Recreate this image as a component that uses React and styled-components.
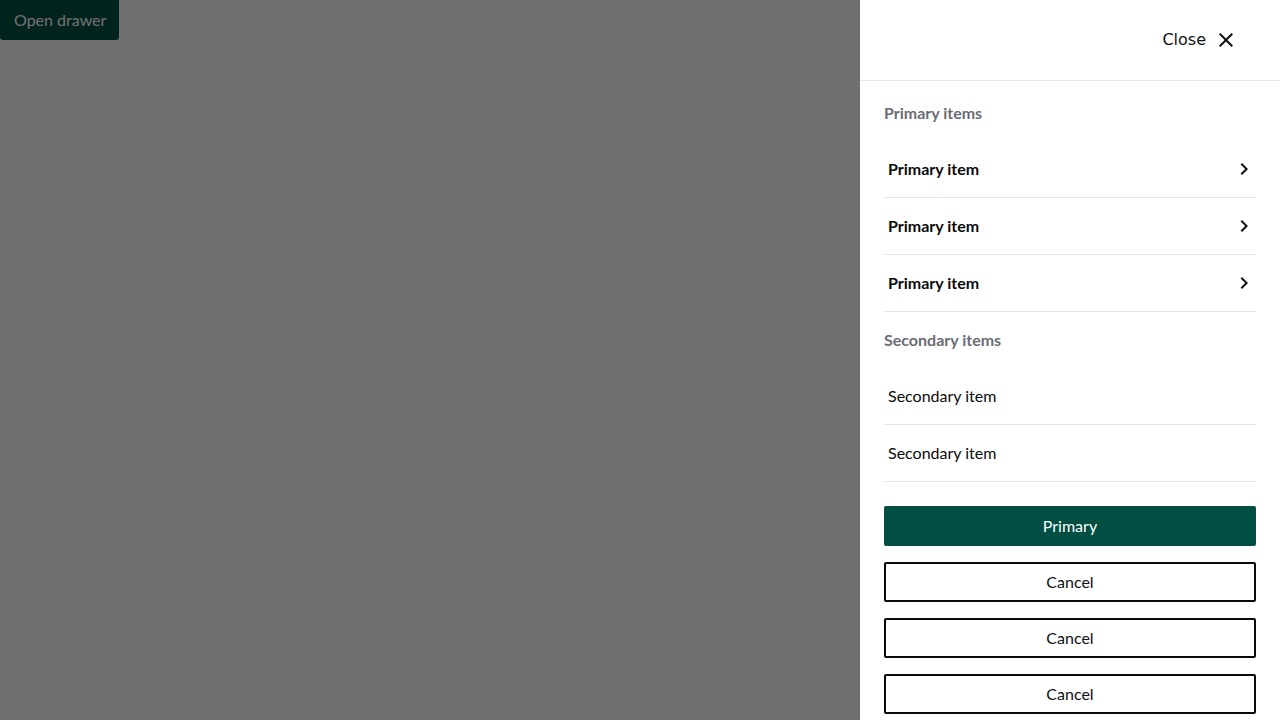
import React from "react";
import styled, { createGlobalStyle } from "styled-components";

const Global = createGlobalStyle`
  html, body { margin: 0; padding: 0; }
  body { font-family: Lato, "Noto Sans", sans-serif; background: #ffffff; }
  * { box-sizing: border-box; }
`;

const Page = styled.div`
  position: relative;
  width: 1280px;
  height: 720px;
  overflow: hidden;
  background: #ffffff;
`;

const OpenButton = styled.button`
  display: block;
  width: 119px;
  height: 40px;
  padding: 0 0 1px 14px;
  text-align: left;
  border: none;
  border-radius: 0 0 3px 3px;
  background: #005041;
  color: #ffffff;
  font-family: Lato, sans-serif;
  font-size: 16px;
  cursor: pointer;
`;

const Overlay = styled.div`
  position: absolute;
  inset: 0;
  background: rgba(0, 0, 0, 0.56);
`;

const Drawer = styled.aside`
  position: absolute;
  top: 0;
  right: 0;
  width: 420px;
  height: 720px;
  background: #ffffff;
  display: flex;
  flex-direction: column;
`;

const Header = styled.header`
  height: 81px;
  flex: none;
  display: flex;
  align-items: center;
  justify-content: flex-end;
  padding: 0 42px 1px 0;
  border-bottom: 1px solid #e6e6e6;
`;

const CloseButton = styled.button`
  display: flex;
  align-items: center;
  gap: 8px;
  border: none;
  background: none;
  padding: 0;
  color: #111111;
  font-family: "DejaVu Sans", sans-serif;
  font-size: 16px;
  cursor: pointer;
`;

const Body = styled.div`
  padding: 20px 24px 0;
  display: flex;
  flex-direction: column;
`;

const SectionTitle = styled.h3`
  margin: ${(p) => (p.$first ? "0" : "16px")} 0 16px;
  font-size: 16px;
  line-height: 24px;
  font-weight: 700;
  color: #6b6c75;
`;

const List = styled.ul`
  list-style: none;
  margin: 0;
  padding: 0;
`;

const Item = styled.li`
  height: 57px;
  display: flex;
  align-items: center;
  justify-content: space-between;
  padding: 0 0 1px 4px;
  border-bottom: 1px solid #e4e4e4;
  font-size: 16px;
  color: #0b0b0b;
  font-weight: ${(p) => (p.$primary ? 700 : 400)};
`;

const Actions = styled.div`
  display: flex;
  flex-direction: column;
  gap: 16px;
  margin-top: 24px;
`;

const ActionButton = styled.button`
  height: 40px;
  width: 100%;
  padding: 0 0 2px;
  border-radius: 2px;
  font-family: Lato, sans-serif;
  font-size: 16px;
  cursor: pointer;
  border: 2px solid ${(p) => (p.$primary ? "#004f42" : "#0a0a0a")};
  background: ${(p) => (p.$primary ? "#004f42" : "#ffffff")};
  color: ${(p) => (p.$primary ? "#ffffff" : "#111111")};
`;

const CloseIcon = () => (
  <svg width="24" height="24" viewBox="0 0 24 24" fill="#111">
    <path d="M19 6.41 17.59 5 12 10.59 6.41 5 5 6.41 10.59 12 5 17.59 6.41 19 12 13.41 17.59 19 19 17.59 13.41 12z" />
  </svg>
);

const Chevron = () => (
  <svg width="24" height="24" viewBox="0 0 24 24" fill="#111">
    <path d="M10 6 8.59 7.41 13.17 12l-4.58 4.59L10 18l6-6z" />
  </svg>
);

export default function App() {
  return (
    <Page>
      <Global />
      <OpenButton>Open drawer</OpenButton>
      <Overlay />
      <Drawer>
        <Header>
          <CloseButton>
            Close
            <CloseIcon />
          </CloseButton>
        </Header>
        <Body>
          <SectionTitle $first>Primary items</SectionTitle>
          <List>
            {[0, 1, 2].map((i) => (
              <Item key={i} $primary>
                Primary item
                <Chevron />
              </Item>
            ))}
          </List>
          <SectionTitle>Secondary items</SectionTitle>
          <List>
            {[0, 1].map((i) => (
              <Item key={i}>Secondary item</Item>
            ))}
          </List>
          <Actions>
            <ActionButton $primary>Primary</ActionButton>
            <ActionButton>Cancel</ActionButton>
            <ActionButton>Cancel</ActionButton>
            <ActionButton>Cancel</ActionButton>
          </Actions>
        </Body>
      </Drawer>
    </Page>
  );
}
